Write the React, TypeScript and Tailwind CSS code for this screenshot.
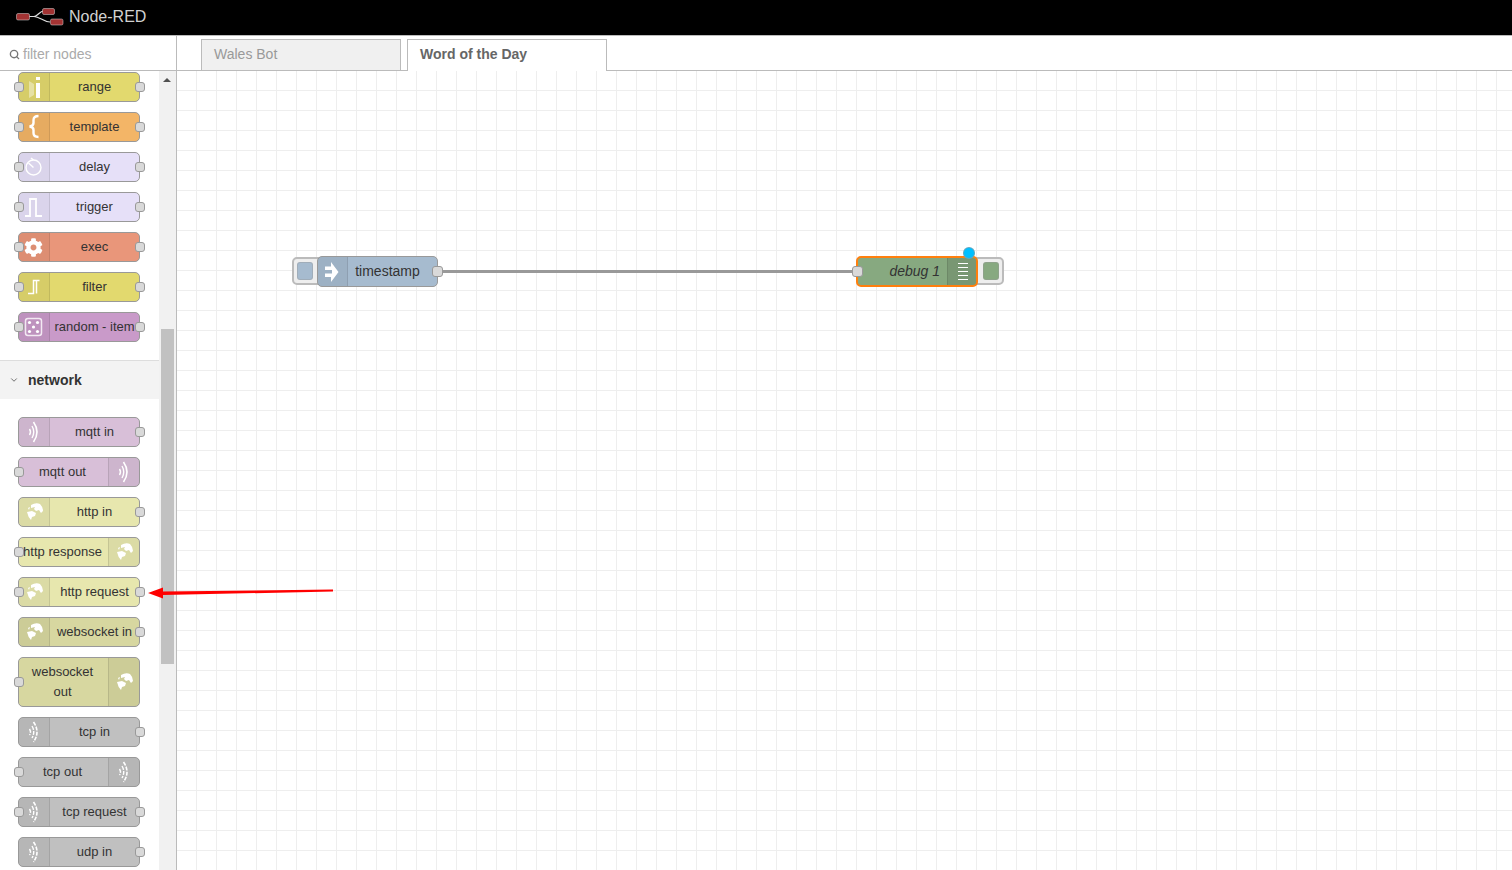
import type { ReactNode } from "react";
import { FaCog } from "react-icons/fa";
import { ChevronDown, Search } from "lucide-react";

// icon drawings use a 30x30 box, shown in the 28px inner height of a node
const Svg = ({ children }: { children: ReactNode }) => (
  <svg width="30" height="28" viewBox="1 1 30 28" fill="none" className="block">
    {children}
  </svg>
);

const RangeIcon = () => (
  <Svg>
    <path d="M11 9 L16 12 V23 L11 26 Z" fill="#fff" fillOpacity="0.4" />
    <rect x="18" y="11" width="4" height="15" fill="#fff" />
    <rect x="18" y="5" width="4" height="3" fill="#fff" />
  </Svg>
);

const TemplateIcon = () => (
  <Svg>
    <path
      d="M20.5 4 Q15.5 4 15.5 8 V11 Q15.5 14 11.5 14.5 Q15.5 15 15.5 18 V21 Q15.5 25 20.5 25"
      stroke="#fff"
      strokeWidth="2.4"
    />
  </Svg>
);

const DelayIcon = () => (
  <Svg>
    <circle cx="15.5" cy="15.5" r="7.5" stroke="#fff" strokeWidth="1.4" />
    <path d="M15.5 15.5 L10.5 11" stroke="#fff" strokeWidth="1.4" />
    <path d="M13 6 L15.5 8" stroke="#fff" strokeWidth="1.6" />
  </Svg>
);

const TriggerIcon = () => (
  <Svg>
    <path d="M7 24 H12 V7 H18 V24 H24" stroke="#fff" strokeWidth="1.8" />
  </Svg>
);

const FilterIcon = () => (
  <Svg>
    <path d="M10 21.5 H15.5 V8.5 H21.5 M18.5 8.5 V21.5" stroke="#fff" strokeWidth="1.5" />
  </Svg>
);

const DiceIcon = () => (
  <Svg>
    <rect x="7.5" y="6.5" width="16" height="17" rx="2.5" stroke="#fff" strokeOpacity="0.8" strokeWidth="1.5" />
    {[
      [11.5, 10.5],
      [19.5, 10.5],
      [15.5, 15],
      [11.5, 19.5],
      [19.5, 19.5],
    ].map(([x, y]) => (
      <circle key={`${x}-${y}`} cx={x} cy={y} r="1.6" fill="#fff" />
    ))}
  </Svg>
);

const BridgeIcon = ({ dashed }: { dashed?: boolean }) => {
  const dash = dashed ? "4 1.2" : undefined;
  return (
    <Svg>
      <path d="M11.5 12 Q13.5 15 11.5 18" stroke="#fff" strokeWidth="1.4" strokeDasharray={dash} />
      <path d="M14 9 Q17.5 15 14 21" stroke="#fff" strokeWidth="1.4" strokeDasharray={dash} />
      <path d="M15.5 5 Q22.5 15 15.5 25" stroke="#fff" strokeWidth="1.6" strokeDasharray={dash} />
    </Svg>
  );
};

const GlobeIcon = () => (
  <Svg>
    <path d="M13 8 Q18 5 22 7 Q25 10 25 14 L23 16 L21 13 L18 14 L16 12 L17 10 L13 11 Z" fill="#fff" />
    <path d="M10 11 L12 10 L11 13 Z" fill="#fff" />
    <path d="M9 15 L14 14 L18 16 L17 19 L14 20 L13 23 Q10 20 9 15 Z" fill="#fff" />
  </Svg>
);

const InjectIcon = () => (
  <svg width="30" height="29" viewBox="1 1 30 29" fill="none" className="block">
    <path d="M14 6 L21.5 16 L14 26 V21 L18 16 L14 11 Z" fill="#fff" />
    <rect x="8" y="10.5" width="8" height="3.5" fill="#fff" />
    <rect x="8" y="17.5" width="8" height="3.5" fill="#fff" />
    <path d="M15 11 L20 16 L15 21 Z" fill="#fff" />
  </svg>
);

const DebugIcon = () => (
  <Svg>
    {[6.5, 10.5, 14.5, 18.5, 22.5].map((y) => (
      <path key={y} d={`M11 ${y} H21`} stroke="#fff" strokeWidth="1.2" />
    ))}
  </Svg>
);

const Cog = () => (
  <div className="flex h-[28px] w-[30px] items-center justify-center pr-[2px]">
    <FaCog size={19} color="#fff" />
  </div>
);

const Port = ({ side }: { side: "left" | "right" }) => (
  <span
    className={`absolute top-1/2 h-[10px] w-[10px] -translate-y-1/2 rounded-[3px] border border-[#999] bg-[#d9d9d9] ${
      side === "left" ? "left-[-5px]" : "right-[-6px]"
    }`}
  />
);

type NodeProps = {
  label: string;
  color: string;
  icon: ReactNode;
  iconRight?: boolean;
  input?: boolean;
  output?: boolean;
};

function PaletteNode({ label, color, icon, iconRight, input, output }: NodeProps) {
  const cell = (
    <div
      className={`flex w-[31px] shrink-0 items-center justify-center self-stretch border-black/10 bg-black/5 ${
        iconRight ? "rounded-r-[4px] border-l" : "rounded-l-[4px] border-r"
      }`}
    >
      {icon}
    </div>
  );
  return (
    <div className={`relative flex w-[122px] rounded-[5px] border border-[#999] ${color}`}>
      {!iconRight && cell}
      <div
        className={`min-w-0 flex-1 whitespace-pre-line py-[4px] text-center text-[13px] leading-[20px] text-[#333] ${
          iconRight ? "pr-[2px]" : ""
        }`}
      >
        {label}
      </div>
      {iconRight && cell}
      {input && <Port side="left" />}
      {output && <Port side="right" />}
    </div>
  );
}

const functionNodes: NodeProps[] = [
  { label: "range", color: "bg-[#e2d96e]", icon: <RangeIcon />, input: true, output: true },
  { label: "template", color: "bg-[#f3b567]", icon: <TemplateIcon />, input: true, output: true },
  { label: "delay", color: "bg-[#e6e0f8]", icon: <DelayIcon />, input: true, output: true },
  { label: "trigger", color: "bg-[#e6e0f8]", icon: <TriggerIcon />, input: true, output: true },
  { label: "exec", color: "bg-[#e9967a]", icon: <Cog />, input: true, output: true },
  { label: "filter", color: "bg-[#e2d96e]", icon: <FilterIcon />, input: true, output: true },
  { label: "random - item", color: "bg-[#c99ac9]", icon: <DiceIcon />, input: true, output: true },
];

const networkNodes: NodeProps[] = [
  { label: "mqtt in", color: "bg-[#d8bfd8]", icon: <BridgeIcon />, output: true },
  { label: "mqtt out", color: "bg-[#d8bfd8]", icon: <BridgeIcon />, iconRight: true, input: true },
  { label: "http in", color: "bg-[#e7e7ae]", icon: <GlobeIcon />, output: true },
  { label: "http response", color: "bg-[#e7e7ae]", icon: <GlobeIcon />, iconRight: true, input: true },
  { label: "http request", color: "bg-[#e7e7ae]", icon: <GlobeIcon />, input: true, output: true },
  { label: "websocket in", color: "bg-[#d7d7a0]", icon: <GlobeIcon />, output: true },
  { label: "websocket\nout", color: "bg-[#d7d7a0]", icon: <GlobeIcon />, iconRight: true, input: true },
  { label: "tcp in", color: "bg-[#c0c0c0]", icon: <BridgeIcon dashed />, output: true },
  { label: "tcp out", color: "bg-[#c0c0c0]", icon: <BridgeIcon dashed />, iconRight: true, input: true },
  { label: "tcp request", color: "bg-[#c0c0c0]", icon: <BridgeIcon dashed />, input: true, output: true },
  { label: "udp in", color: "bg-[#c0c0c0]", icon: <BridgeIcon dashed />, output: true },
];

function Logo() {
  return (
    <svg width="48" height="18" viewBox="0 0 48 18" fill="none" className="block">
      <path d="M13 8.5 H18 C22 8.5 23 3 28 3 M18 8.5 C24 8.5 27 14 34 14" stroke="#ddd" strokeWidth="1.2" />
      <rect x="0.5" y="5.5" width="13" height="6.5" rx="1.5" fill="#a33333" stroke="#ddd" strokeWidth="0.5" />
      <rect x="26.5" y="0.5" width="12" height="6" rx="1.5" fill="#a33333" stroke="#ddd" strokeWidth="0.5" />
      <rect x="34.5" y="11" width="12.5" height="6" rx="1.5" fill="#a33333" stroke="#ddd" strokeWidth="0.5" />
    </svg>
  );
}

function Workspace() {
  return (
    <div className="relative min-h-0 flex-1 bg-white bg-[linear-gradient(#eeeeee_1px,transparent_1px),linear-gradient(90deg,#eeeeee_1px,transparent_1px)] bg-[length:20px_20px] bg-[position:19px_19px]">
      {/* wire */}
      <div className="absolute left-[260px] top-[199px] h-[3px] w-[420px] bg-[#999]" />

      {/* timestamp inject node */}
      <div className="absolute left-[115px] top-[186px] flex h-[28px] w-[34px] items-center rounded-[5px] border-2 border-[#bbb] bg-[#eee] pl-[3px]">
        <div className="h-[18px] w-[16px] rounded-[3px] border border-[#999]/40 bg-[#a6bbcf]" />
      </div>
      <div className="absolute left-[140px] top-[185px] flex h-[31px] w-[121px] rounded-[5px] border border-[#999] bg-[#a6bbcf]">
        <div className="w-[30px] shrink-0 rounded-l-[4px] border-r border-black/10 bg-black/5">
          <InjectIcon />
        </div>
        <div className="flex-1 pr-[10px] text-center text-[14px] leading-[29px] text-[#333]">timestamp</div>
        <span className="absolute right-[-6px] top-[9px] h-[11px] w-[11px] rounded-[3px] border border-[#999] bg-[#d9d9d9]" />
      </div>

      {/* debug node */}
      <div className="absolute left-[794px] top-[186px] flex h-[28px] w-[33px] items-center justify-end rounded-[5px] border-2 border-[#bbb] bg-[#eee] pr-[3px]">
        <div className="h-[18px] w-[16px] rounded-[3px] border border-[#999]/40 bg-[#87a980]" />
      </div>
      <div className="absolute left-[679px] top-[185px] flex h-[31px] w-[122px] rounded-[5px] border-2 border-[#ff7f0e] bg-[#87a980]">
        <div className="flex-1 pr-[7px] text-right text-[14px] italic leading-[27px] text-[#333]">debug 1</div>
        <div className="w-[29px] shrink-0 overflow-hidden rounded-r-[3px] border-l border-black/10 bg-black/10">
          <DebugIcon />
        </div>
        <span className="absolute left-[-6px] top-[8px] h-[11px] w-[11px] rounded-[3px] border border-[#999] bg-[#d9d9d9]" />
        <span className="absolute right-[1px] top-[-11px] h-[12px] w-[12px] rounded-full border border-[#999]/60 bg-[#00bfff]" />
      </div>
    </div>
  );
}

export default function App() {
  return (
    <div className="relative flex h-screen flex-col overflow-hidden bg-white font-['Liberation_Sans',Arial,sans-serif]">
      <header className="flex h-[36px] shrink-0 items-center gap-[5px] border-b border-[#bbb] bg-black pb-[2px] pl-[16px]">
        <Logo />
        <span className="text-[16px] text-[#d1d1d1]">Node-RED</span>
      </header>

      <div className="flex min-h-0 flex-1">
        {/* palette */}
        <aside className="flex w-[177px] shrink-0 flex-col border-r border-[#bbb]">
          <div className="flex h-[35px] shrink-0 items-center gap-[3px] border-b border-[#bbb] pl-[9px] pt-[3px] text-[14px] text-[#aaa]">
            <Search size={11} strokeWidth={3} color="#777" />
            <span>filter nodes</span>
          </div>
          <div className="flex min-h-0 flex-1">
            <div className="w-[159px] shrink-0 overflow-hidden pt-[1px]">
              <div className="flex flex-col gap-[10px] pb-[18px] pl-[18px]">
                {functionNodes.map((n) => (
                  <PaletteNode key={n.label} {...n} />
                ))}
              </div>
              <div className="flex h-[39px] items-center gap-[9px] border-t border-[#ddd] bg-[#f3f3f3] pl-[9px] text-[14px] font-bold text-[#333]">
                <ChevronDown size={10} strokeWidth={2} color="#555" />
                <span>network</span>
              </div>
              <div className="flex flex-col gap-[10px] pl-[18px] pt-[18px]">
                {networkNodes.map((n) => (
                  <PaletteNode key={n.label} {...n} />
                ))}
              </div>
            </div>
            {/* scrollbar */}
            <div className="w-[17px] shrink-0 bg-[#f1f1f1] pl-[2px]">
              <div className="ml-[2px] mt-[7px] h-0 w-0 border-x-[4px] border-b-[4px] border-x-transparent border-b-[#505050]" />
              <div className="mt-[247px] h-[335px] w-[13px] bg-[#c1c1c1]" />
            </div>
          </div>
        </aside>

        {/* workspace */}
        <main className="flex min-w-0 flex-1 flex-col">
          <div className="flex h-[35px] shrink-0 items-end gap-[6px] border-b border-[#bbb] pl-[24px]">
            <div className="mb-[-1px] flex h-[32px] w-[200px] items-center border border-[#bbb] bg-[#f0f0f0] pb-[2px] pl-[12px] text-[14px] text-[#999]">
              Wales Bot
            </div>
            <div className="mb-[-1px] flex h-[32px] w-[200px] items-center border border-b-0 border-[#bbb] bg-white pb-[2px] pl-[12px] text-[14px] font-bold text-[#666]">
              Word of the Day
            </div>
          </div>
          <Workspace />
        </main>
      </div>

      {/* hand-drawn annotation arrow */}
      <svg className="pointer-events-none absolute left-0 top-0" width="1512" height="870">
        <path d="M333 589.5 L333 591.5 L163 595 L163 598.5 L148 593 L163 587.5 L163 591.5 Z" fill="#ff0000" />
      </svg>
    </div>
  );
}
